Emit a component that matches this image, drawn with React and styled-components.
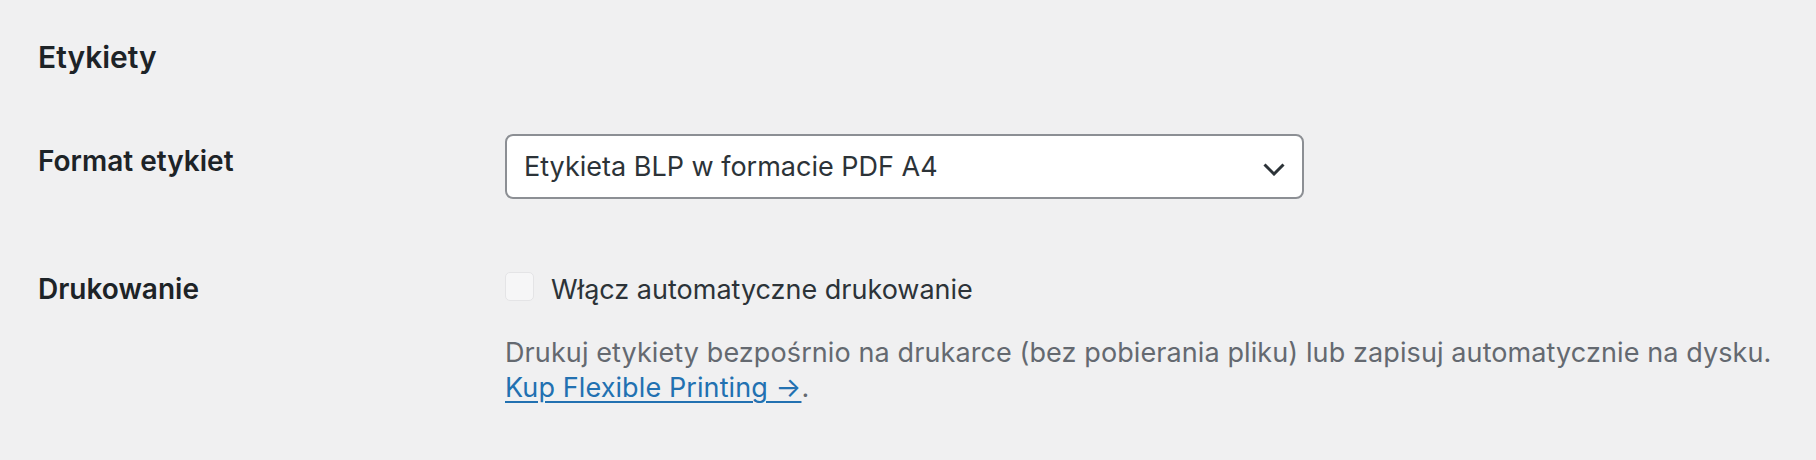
import React from 'react';
import styled, { createGlobalStyle } from 'styled-components';

const GlobalStyle = createGlobalStyle`
    html, body {
        margin: 0;
        padding: 0;
        background: #f0f0f1;
    }
    body {
        font-family: Inter, "Noto Sans", "Liberation Sans", sans-serif;
        color: #1d2327;
    }
`;

const Page = styled.div`
    padding: 37px 38px 40px 38px;
`;

const Heading = styled.h2`
    margin: 0;
    font-size: 30px;
    line-height: 40px;
    font-weight: 600;
    color: #1d2327;
`;

const Row = styled.div`
    display: grid;
    grid-template-columns: 467px 1fr;
    margin-top: ${(p) => p.gap}px;
`;

const Label = styled.div`
    padding-top: ${(p) => p.offset || 0}px;
    font-size: 28px;
    line-height: 30px;
    font-weight: 600;
    color: #1d2327;
`;

const Field = styled.div`
    display: flex;
    flex-direction: column;
`;

const Select = styled.div`
    box-sizing: border-box;
    width: 799px;
    height: 65px;
    display: flex;
    align-items: center;
    justify-content: space-between;
    padding: 0 17px 0 17px;
    background: #fff;
    border: 2px solid #8c8f94;
    border-radius: 8px;
    font-size: 27px;
    color: #2c3338;
`;

const Chevron = styled.svg`
    width: 22px;
    height: 13px;
    margin-top: 5px;
`;

const CheckLine = styled.label`
    display: flex;
    align-items: flex-start;
    gap: 17px;
    margin-top: -2px;
    font-size: 27px;
    line-height: 36px;
    color: #2c3338;
`;

const Checkbox = styled.span`
    box-sizing: border-box;
    width: 29px;
    height: 29px;
    flex: none;
    background: #f6f6f7;
    border: 1px solid #e4e4e6;
    border-radius: 5px;
`;

const Description = styled.p`
    margin: 27px 0 0 0;
    font-size: 27px;
    line-height: 35px;
    letter-spacing: 0.1px;
    color: #646970;
`;

const Link = styled.a`
    color: #2271b1;
    text-decoration: underline;
    text-decoration-thickness: 2px;
    text-underline-offset: 4px;
`;

const App = () => (
    <Page>
        <GlobalStyle />
        <Heading>Etykiety</Heading>

        <Row gap={57}>
            <Label offset={12}>Format etykiet</Label>
            <Field>
                <Select>
                    <span>Etykieta BLP w formacie PDF A4</span>
                    <Chevron viewBox="0 0 22 13" fill="none">
                        <path d="M1.5 1.5 L11 11 L20.5 1.5" stroke="#2c3338" strokeWidth="3" />
                    </Chevron>
                </Select>
            </Field>
        </Row>

        <Row gap={75}>
            <Label>Drukowanie</Label>
            <Field>
                <CheckLine>
                    <Checkbox />
                    Włącz automatyczne drukowanie
                </CheckLine>
                <Description>
                    Drukuj etykiety bezpośrnio na drukarce (bez pobierania pliku) lub zapisuj automatycznie na dysku.
                    <br />
                    <Link href="#">Kup Flexible Printing →</Link>.
                </Description>
            </Field>
        </Row>
    </Page>
);

export default App;
